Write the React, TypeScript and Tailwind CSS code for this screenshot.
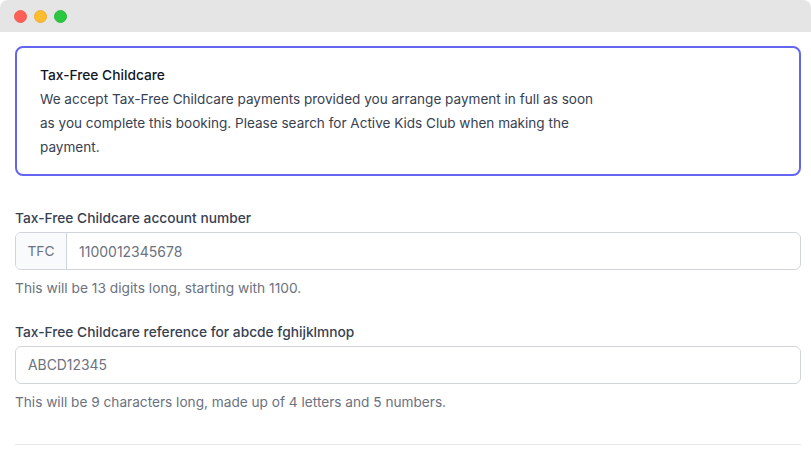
export default function App() {
  return (
    <div className="h-[452px] w-[811px] overflow-hidden rounded-[8px] bg-white font-['Inter',sans-serif]">
      <div className="flex h-8 items-center gap-[7px] bg-[#e5e5e5] pl-[14px] pt-[1px]">
        <span className="h-[13px] w-[13px] rounded-full border border-[#f0605a] bg-[#ff5f57]" />
        <span className="h-[13px] w-[13px] rounded-full border border-[#f2ac33] bg-[#febc2e]" />
        <span className="h-[13px] w-[13px] rounded-full border border-[#2bb83e] bg-[#28c840]" />
      </div>

      <div className="pl-[15px] pr-[10px] pt-[14px]">
        <div className="h-[130px] rounded-[8px] border-2 border-[#6366f1] pl-[23px] pt-[15px] leading-[24px]">
          <div className="text-[13.75px] font-medium text-[#111827]">Tax-Free Childcare</div>
          <p className="w-[556px] text-[13.55px] text-[#374151]">
            We accept Tax-Free Childcare payments provided you arrange payment in full as soon as you complete this booking. Please search for Active Kids Club when making the payment.
          </p>
        </div>

        <div className="mt-[32px]">
          <label className="block text-[13.75px] leading-[20px] font-medium text-[#374151]">Tax-Free Childcare account number</label>
          <div className="mt-[4px] flex h-[38px] overflow-hidden rounded-[6px] border border-[#d1d5db]">
            <div className="flex w-[51px] items-center justify-center border-r border-[#d1d5db] bg-[#f9fafb] text-[13.75px] text-[#6b7280]">TFC</div>
            <div className="flex items-center pl-3 text-[14px] text-[#6b7280]">1100012345678</div>
          </div>
          <p className="mt-[8px] text-[13.75px] leading-[20px] text-[#6b7280]">This will be 13 digits long, starting with 1100.</p>
        </div>

        <div className="mt-[24px]">
          <label className="block text-[13.75px] leading-[20px] font-medium text-[#374151]">Tax-Free Childcare reference for abcde fghijklmnop</label>
          <div className="mt-[4px] flex h-[38px] items-center rounded-[6px] border border-[#d1d5db] pl-3 text-[13.9px] text-[#6b7280]">ABCD12345</div>
          <p className="mt-[8px] text-[13.65px] leading-[20px] text-[#6b7280]">This will be 9 characters long, made up of 4 letters and 5 numbers.</p>
        </div>

        <div className="mt-[32px] border-t border-[#e5e7eb]" />
      </div>
    </div>
  );
}
